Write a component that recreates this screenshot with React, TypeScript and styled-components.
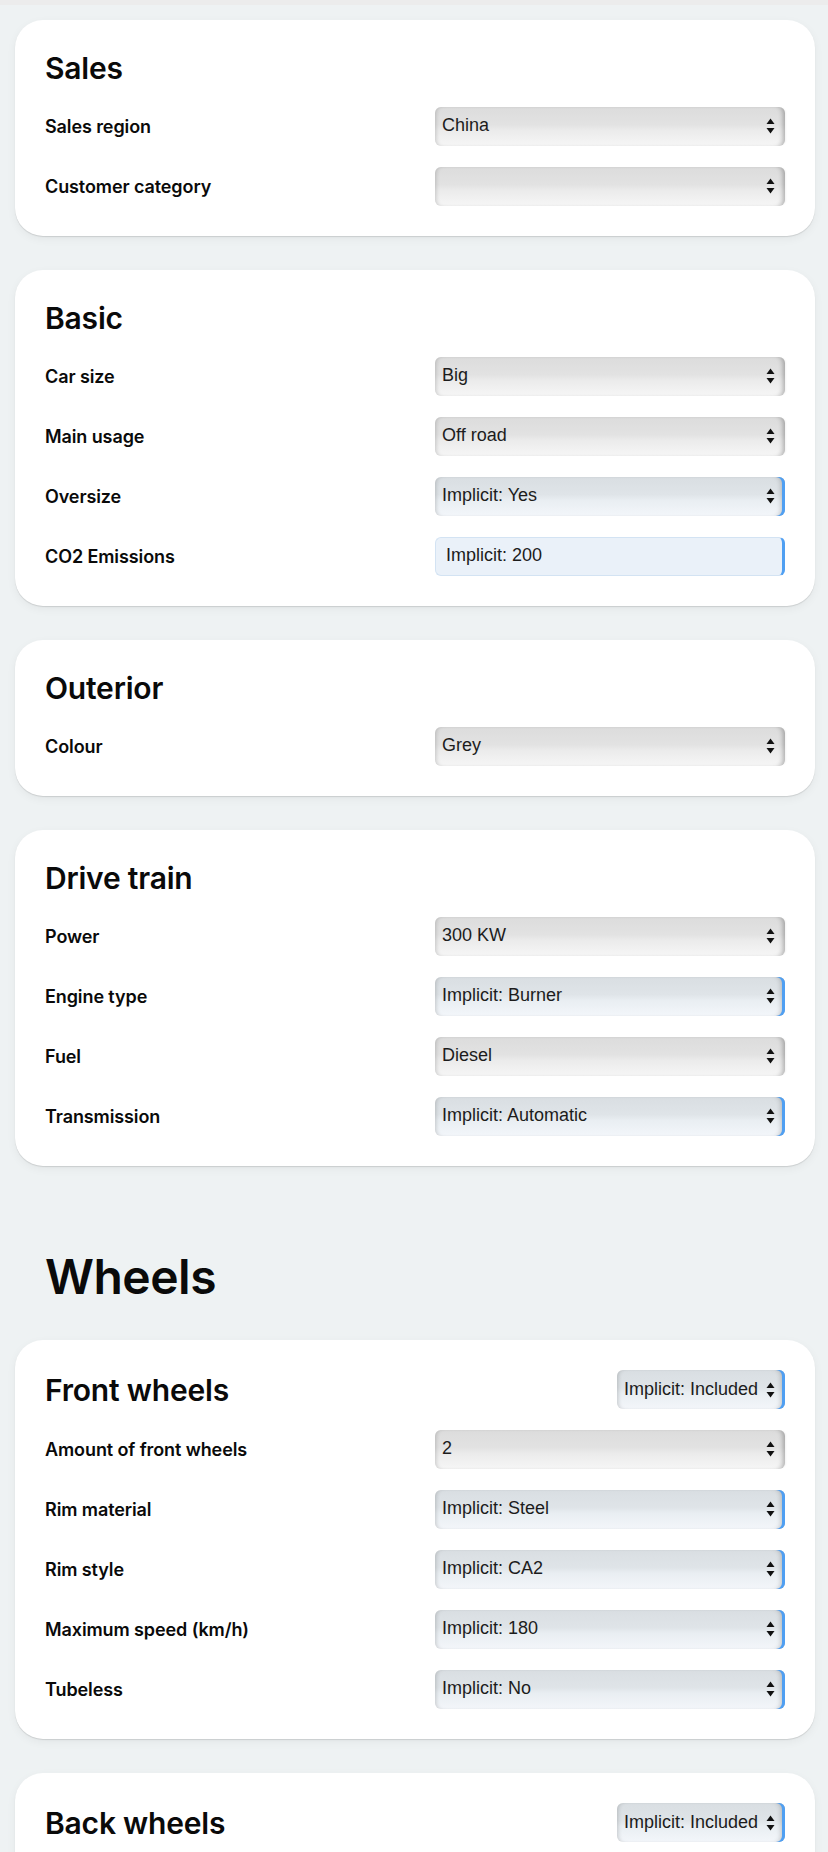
import styled, { createGlobalStyle, css } from "styled-components";

const GlobalStyle = createGlobalStyle`
	html, body {
		margin: 0;
		padding: 0;
		background: #eef2f3;
	}
	* {
		box-sizing: border-box;
	}
`;

const TopStrip = styled.div`
	height: 5px;
	background: #ececec;
`;

const Page = styled.main`
	display: flex;
	flex-direction: column;
	gap: 34px;
	padding: 15px 13px 40px 15px;
	font-family: Inter, "Noto Sans", sans-serif;
	color: #0a0a0a;
`;

const Card = styled.section`
	display: flex;
	flex-direction: column;
	gap: 20px;
	padding: 30px;
	background: #ffffff;
	border-radius: 28px;
	box-shadow: 0 1px 1px rgba(0, 0, 0, 0.12), 0 3px 10px rgba(0, 0, 0, 0.05);
`;

const CardHeader = styled.div`
	display: flex;
	align-items: center;
	justify-content: space-between;
	min-height: 36px;
`;

const CardTitle = styled.h2`
	margin: 0;
	font-size: 30px;
	font-weight: 600;
	line-height: 36px;
	letter-spacing: -0.2px;
`;

const SectionTitle = styled.h1`
	margin: 0;
	padding: 48px 30px 0;
	font-size: 48px;
	font-weight: 600;
	line-height: 58px;
	letter-spacing: -0.5px;
`;

const Row = styled.div`
	display: flex;
	align-items: center;
	justify-content: space-between;
	height: 40px;
`;

const Label = styled.label`
	font-size: 18px;
	font-weight: 600;
	letter-spacing: -0.1px;
`;

const SelectWrap = styled.div<{ $compact?: boolean }>`
	position: relative;
	width: ${(p) => (p.$compact ? "auto" : "350px")};
	height: 39px;
`;

const fieldBase = css`
	width: 100%;
	height: 100%;
	margin: 0;
	font-family: "Liberation Sans", Arial, sans-serif;
	font-size: 18px;
	color: #1c1c1c;
	border-radius: 6px;
	outline: none;
`;

const Select = styled.select<{ $implicit?: boolean; $compact?: boolean }>`
	${fieldBase};
	appearance: none;
	-webkit-appearance: none;
	padding: 0 ${(p) => (p.$compact ? "26px" : "30px")} 2px 7px;
	border: none;
	background: ${(p) =>
		p.$implicit
			? "linear-gradient(#d9dee2 0%, #dfe4e8 45%, #e9eef2 60%, #f3f6fa 100%)"
			: "linear-gradient(#dcdcdc 0%, #e2e2e2 45%, #ebebeb 60%, #f6f6f6 100%)"};
	box-shadow: ${(p) =>
		p.$implicit
			? "inset 4px 0 4px -3px rgba(0,0,0,0.18), inset -3px 0 0 #4f9ff2, inset -7px 0 5px -3px rgba(0,0,0,0.2)"
			: "inset 4px 0 4px -3px rgba(0,0,0,0.18), inset -5px 0 5px -3px rgba(0,0,0,0.28), 2px 0 2px -1px rgba(0,0,0,0.05)"};
	cursor: pointer;
`;

const TextInput = styled.input`
	${fieldBase};
	padding: 0 12px 2px 10px;
	border: 1px solid #d3e3f3;
	border-right: 3px solid #4f9ff2;
	background: #eaf1f9;
`;

const Arrows = styled.svg`
	position: absolute;
	top: 50%;
	right: 10px;
	width: 9px;
	height: 16px;
	transform: translateY(-50%);
	pointer-events: none;
`;

type Field = {
	label: string;
	value: string;
	implicit?: boolean;
	input?: boolean;
};

type Group = {
	title: string;
	header?: string;
	fields: Field[];
};

const sales: Group[] = [
	{
		title: "Sales",
		fields: [
			{ label: "Sales region", value: "China" },
			{ label: "Customer category", value: "" },
		],
	},
	{
		title: "Basic",
		fields: [
			{ label: "Car size", value: "Big" },
			{ label: "Main usage", value: "Off road" },
			{ label: "Oversize", value: "Implicit: Yes", implicit: true },
			{ label: "CO2 Emissions", value: "Implicit: 200", input: true },
		],
	},
	{
		title: "Outerior",
		fields: [{ label: "Colour", value: "Grey" }],
	},
	{
		title: "Drive train",
		fields: [
			{ label: "Power", value: "300 KW" },
			{ label: "Engine type", value: "Implicit: Burner", implicit: true },
			{ label: "Fuel", value: "Diesel" },
			{ label: "Transmission", value: "Implicit: Automatic", implicit: true },
		],
	},
];

const wheels: Group[] = [
	{
		title: "Front wheels",
		header: "Implicit: Included",
		fields: [
			{ label: "Amount of front wheels", value: "2" },
			{ label: "Rim material", value: "Implicit: Steel", implicit: true },
			{ label: "Rim style", value: "Implicit: CA2", implicit: true },
			{ label: "Maximum speed (km/h)", value: "Implicit: 180", implicit: true },
			{ label: "Tubeless", value: "Implicit: No", implicit: true },
		],
	},
	{
		title: "Back wheels",
		header: "Implicit: Included",
		fields: [
			{ label: "Amount of back wheels", value: "2" },
			{ label: "Rim material", value: "Implicit: Steel", implicit: true },
			{ label: "Rim style", value: "Implicit: CA2", implicit: true },
			{ label: "Maximum speed (km/h)", value: "Implicit: 180", implicit: true },
			{ label: "Tubeless", value: "Implicit: No", implicit: true },
		],
	},
];

function Dropdown({ value, implicit, compact }: { value: string; implicit?: boolean; compact?: boolean }) {
	return (
		<SelectWrap $compact={compact}>
			<Select $implicit={implicit} $compact={compact} defaultValue={value}>
				<option value={value}>{value}</option>
			</Select>
			<Arrows viewBox="0 0 9 16">
				<path d="M4.5 0.5 L8.5 6 L0.5 6 Z" fill="#111" />
				<path d="M4.5 15.5 L8.5 10 L0.5 10 Z" fill="#111" />
			</Arrows>
		</SelectWrap>
	);
}

function GroupCard({ group }: { group: Group }) {
	return (
		<Card>
			<CardHeader>
				<CardTitle>{group.title}</CardTitle>
				{group.header && <Dropdown value={group.header} implicit compact />}
			</CardHeader>
			{group.fields.map((f) => (
				<Row key={f.label}>
					<Label>{f.label}</Label>
					{f.input ? (
						<SelectWrap>
							<TextInput defaultValue={f.value} />
						</SelectWrap>
					) : (
						<Dropdown value={f.value} implicit={f.implicit} />
					)}
				</Row>
			))}
		</Card>
	);
}

function App() {
	return (
		<>
			<GlobalStyle />
			<TopStrip />
			<Page>
				{sales.map((g) => (
					<GroupCard key={g.title} group={g} />
				))}
				<SectionTitle>Wheels</SectionTitle>
				{wheels.map((g) => (
					<GroupCard key={g.title} group={g} />
				))}
			</Page>
		</>
	);
}

export default App;
